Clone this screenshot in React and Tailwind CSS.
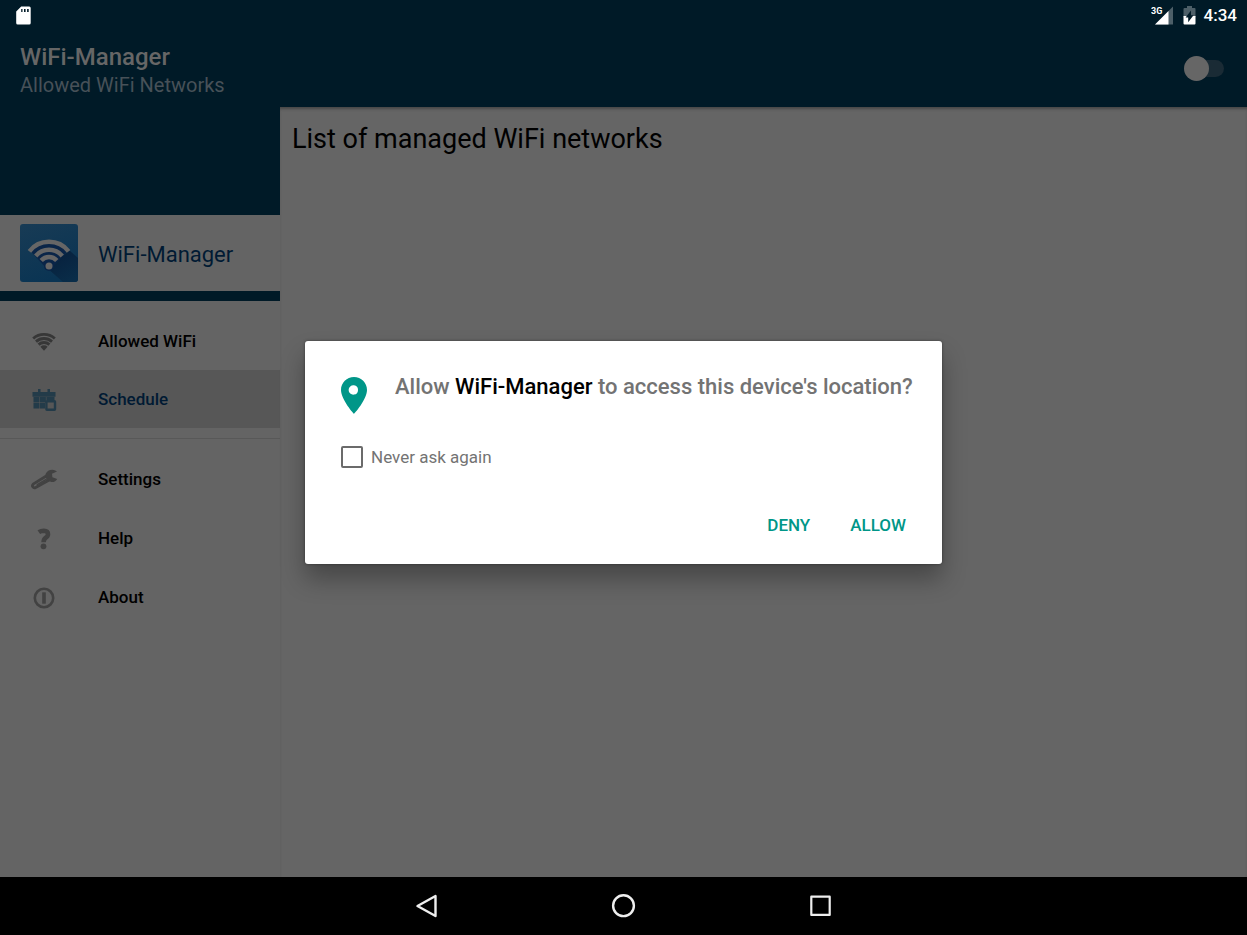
import React from "react";

function SdCardIcon() {
  return (
    <svg width="15" height="19" viewBox="0 0 15 19" aria-hidden="true">
      <path
        fill="#fff"
        fillRule="evenodd"
        d="M5.2 0.5H13.2Q14.7 0.5 14.7 2V17Q14.7 18.5 13.2 18.5H1.7Q0.2 18.5 0.2 17V5.5ZM5.2 3V6H6.5V3ZM8 3V6H9.6V3ZM11.1 3V6H12.7V3Z"
      />
    </svg>
  );
}

function SignalIcon() {
  return (
    <svg width="22" height="19" viewBox="0 0 22 19" role="img" aria-label="3G signal">
      <path fill="#4d5f68" d="M22 0.500V18.500H4Z" />
      <path fill="#fff" d="M17.500 5V18.500H4Z" />
      <path fill="#001a27" d="M0 0H13V5.500L9.500 9.500H0Z" />
      <text x="0" y="8" fill="#fff" className="text-[9px] font-bold">
        3G
      </text>
    </svg>
  );
}

function BatteryIcon() {
  return (
    <svg width="13" height="19" viewBox="0 0 13 19" aria-hidden="true">
      <path fill="#4d5f68" d="M4 0H9V2H11.5Q12.5 2 12.5 3V11H0.5V3Q0.5 2 1.5 2H4Z" />
      <path fill="#fff" d="M0.5 10H12.5V17.5Q12.5 18.5 11.5 18.5H1.5Q0.5 18.5 0.5 17.5Z" />
      <path fill="#001a27" d="M8 4.500V9.200H10.500L5.200 16.200V11.500H2.600Z" />
    </svg>
  );
}

function AppLogo() {
  return (
    <svg width="58" height="58" viewBox="0 0 58 58" aria-hidden="true">
      <defs>
        <linearGradient id="logoFill" x1="0" y1="0" x2="0.4" y2="1">
          <stop offset="0" stopColor="#183b55" />
          <stop offset="1" stopColor="#0a3453" />
        </linearGradient>
        <linearGradient id="logoShade" x1="0.2" y1="0" x2="0.8" y2="1">
          <stop offset="0" stopColor="#071f3c" />
          <stop offset="1" stopColor="#092d49" />
        </linearGradient>
      </defs>
      <rect width="58" height="58" rx="3" fill="url(#logoFill)" />
      <path d="M49.500 26.500L58 34V55Q58 58 55 58H43L27 44Z" fill="url(#logoShade)" />
      <path d="M10.200 26.700A24.500 24.500 0 0 1 47.800 26.700L31 45H27Z" fill="#0a2548" />
      <g fill="none" stroke="#666" strokeWidth="4.400">
        <path d="M9.400 27.300A25 25 0 0 1 48.600 27.300" />
        <path d="M15.700 32A17.400 17.400 0 0 1 42.300 32" />
        <path d="M21.200 36.500A10.300 10.300 0 0 1 36.800 36.500" />
      </g>
      <circle cx="29" cy="42" r="5" fill="#0a2548" />
      <circle cx="29" cy="42" r="3.500" fill="#666" />
    </svg>
  );
}

function WifiIcon() {
  return (
    <svg width="28" height="28" viewBox="0 0 28 28" aria-hidden="true">
      <g fill="none" stroke="#373737" strokeWidth="2.900">
        <path d="M3.200 10.500A16.200 16.200 0 0 1 24.800 10.500" />
        <path d="M6 13.600A12 12 0 0 1 22 13.600" />
        <path d="M8.600 16.600A8 8 0 0 1 19.400 16.600" />
      </g>
      <path fill="#373737" d="M10.400 18.700A5.200 5.200 0 0 1 17.600 18.700L14 22.800Z" />
    </svg>
  );
}

function CalendarIcon() {
  return (
    <svg width="28" height="28" viewBox="0 0 28 28" aria-hidden="true">
      <g fill="#233b49">
        <path d="M2.500 6H8V3H10.500V6H17.500V3H20V6H25.500V10.800H2.500Z" />
        <path d="M3.500 11.100H9V16.400H3.500ZM9.500 11.100H15.900V16.400H9.500ZM16.400 11.100H24.500V14H16.400ZM3.500 16.900H9V22.500H3.500ZM9.500 16.900H15V22.500H9.500Z" />
      </g>
      <rect x="16.400" y="15.200" width="8.600" height="8.600" rx="0.500" fill="#575757" stroke="#233b49" strokeWidth="2.400" />
    </svg>
  );
}

function WrenchIcon() {
  return (
    <svg width="28" height="28" viewBox="0 0 28 28" aria-hidden="true">
      <path
        fill="none"
        stroke="#424242"
        strokeWidth="2.800"
        strokeLinejoin="round"
        d="M16.300 10L3.500 17.900Q1.800 19.300 2.800 20.800Q3.900 22.500 5.700 21.500L19.600 13.800"
      />
      <path stroke="#424242" strokeWidth="1.400" strokeLinecap="round" d="M7.200 18.600L16.200 13.300" />
      <path
        fill="#424242"
        d="M27 5.500L22 7.800L22.400 11.300L27.200 12.900Q25.500 16.200 21.500 16Q18.500 15.800 16.300 12.800L15.200 9.500Q16.200 5.200 20 4.100Q24 3.100 27 5.500Z"
      />
    </svg>
  );
}

function HelpIcon() {
  return (
    <svg width="28" height="28" viewBox="0 0 28 28" aria-hidden="true">
      <path
        fill="none"
        stroke="#424242"
        strokeWidth="4.600"
        d="M8.800 7.200Q11 5.700 13.800 5.700Q18 5.800 18 9.200Q18 11.300 15.700 12.700Q13.600 14 13.600 17.300"
      />
      <circle cx="13.500" cy="21.300" r="2.900" fill="#424242" />
    </svg>
  );
}

function AboutIcon() {
  return (
    <svg width="28" height="28" viewBox="0 0 28 28" aria-hidden="true">
      <circle cx="14" cy="14" r="9.200" fill="none" stroke="#424242" strokeWidth="2.600" />
      <rect x="12.200" y="8.300" width="3.600" height="11.400" fill="#424242" />
    </svg>
  );
}

function PinIcon() {
  return (
    <svg width="26" height="37" viewBox="0 0 26 37" className="shrink-0" aria-hidden="true">
      <path
        fill="#009688"
        fillRule="evenodd"
        d="M13 0C5.800 0 0 5.800 0 13C0 22.700 13 37 13 37S26 22.700 26 13C26 5.800 20.200 0 13 0ZM13 17.600A4.700 4.700 0 1 1 13 8.300A4.700 4.700 0 0 1 13 17.600Z"
      />
    </svg>
  );
}

function NavItem({ icon, label, selected }) {
  return (
    <li>
      <a
        href="#"
        aria-current={selected ? "page" : undefined}
        className={
          selected
            ? "flex h-[58px] items-center gap-10 bg-[#575757] pt-0.5 pl-[30px] text-[17px] font-medium text-[#001a33]"
            : "flex h-[58px] items-center gap-10 pt-0.5 pl-[30px] text-[17px] font-medium text-black"
        }
      >
        {icon}
        {label}
      </a>
    </li>
  );
}

function StatusBar() {
  return (
    <div className="flex h-[30px] items-center justify-between pr-2.5 pl-4 text-white">
      <SdCardIcon />
      <div className="flex items-center">
        <SignalIcon />
        <span className="ml-2.5 flex">
          <BatteryIcon />
        </span>
        <span className="ml-2 pt-0.5 text-[17px] font-medium">4:34</span>
      </div>
    </div>
  );
}

function AppBar() {
  return (
    <div className="flex h-[77px] items-center justify-between pr-[23px] pl-5">
      <div className="pt-1">
        <h1 className="text-[24px] leading-7 font-medium text-[#666]">WiFi-Manager</h1>
        <p className="text-[20px] leading-7 text-[#475158]">Allowed WiFi Networks</p>
      </div>
      <input
        type="checkbox"
        role="switch"
        aria-label="WiFi manager enabled"
        className="relative h-[25px] w-10 appearance-none before:absolute before:top-1 before:right-0 before:h-[17px] before:w-8 before:rounded-full before:bg-[#1a2b35] after:absolute after:top-0 after:left-0 after:size-[25px] after:rounded-full after:bg-[#666]"
      />
    </div>
  );
}

function Sidebar() {
  return (
    <aside className="w-[280px] shrink-0 bg-[#646464]">
      <div className="h-[108px] bg-[#001a27]" />
      <div className="flex h-[76px] items-center gap-5 pl-5 text-[22px] text-[#001a33]">
        <AppLogo />
        <span className="pt-0.5">WiFi-Manager</span>
      </div>
      <div className="h-2.5 bg-[#001a27]" />
      <nav className="pt-[11px]">
        <ul>
          <NavItem icon={<WifiIcon />} label="Allowed WiFi" />
          <NavItem icon={<CalendarIcon />} label="Schedule" selected />
        </ul>
        <ul className="mt-2.5 flex flex-col gap-px border-t border-[#585858] pt-[11px]">
          <NavItem icon={<WrenchIcon />} label="Settings" />
          <NavItem icon={<HelpIcon />} label="Help" />
          <NavItem icon={<AboutIcon />} label="About" />
        </ul>
      </nav>
    </aside>
  );
}

function PermissionDialog() {
  return (
    <div
      role="dialog"
      aria-modal="true"
      aria-labelledby="permission-title"
      className="flex w-[637px] flex-col rounded-[3px] bg-white px-9 pt-9 pb-[18px] shadow-[0_15px_24px_rgba(0,0,0,0.3),0_0_3px_rgba(0,0,0,0.4)]"
    >
      <div className="flex gap-7">
        <PinIcon />
        <h2 id="permission-title" className="text-[22px] leading-5 font-medium whitespace-nowrap text-[#737373]">
          Allow <span className="text-black">WiFi-Manager</span> to access this device's location?
        </h2>
      </div>
      <label className="mt-8 flex items-center gap-2 text-[17px] leading-[22px] text-[#737373]">
        <input
          type="checkbox"
          className="size-[22px] appearance-none rounded-[2px] border-2 border-[#6b6b6b] checked:bg-[#009688]"
        />
        Never ask again
      </label>
      <div className="-mr-2.5 mt-[38px] flex justify-end gap-5 text-[17px] font-medium text-[#009688]">
        <button type="button" className="h-10 px-2.5">
          DENY
        </button>
        <button type="button" className="h-10 px-2.5">
          ALLOW
        </button>
      </div>
    </div>
  );
}

function SystemNav() {
  return (
    <footer className="flex h-[58px] shrink-0 items-center justify-center gap-[169px] bg-black">
      <button type="button" aria-label="Back" className="flex">
        <svg width="28" height="28" viewBox="0 0 28 28" fill="none" stroke="#eee" strokeWidth="2.400" strokeLinejoin="round">
          <path d="M22.500 4V24L4.500 14Z" />
        </svg>
      </button>
      <button type="button" aria-label="Home" className="flex">
        <svg width="28" height="28" viewBox="0 0 28 28" fill="none" stroke="#eee" strokeWidth="2.400">
          <circle cx="13.500" cy="13.700" r="10.400" />
        </svg>
      </button>
      <button type="button" aria-label="Recent apps" className="flex">
        <svg width="28" height="28" viewBox="0 0 28 28" fill="none" stroke="#eee" strokeWidth="2.200" strokeLinejoin="round">
          <rect x="4.300" y="4.700" width="18.400" height="18.200" />
        </svg>
      </button>
    </footer>
  );
}

export default function App() {
  return (
    <div className="flex min-h-screen flex-col bg-black font-['Roboto',sans-serif]">
      <div className="relative flex flex-1 flex-col">
        <header className="bg-[#001a27]">
          <StatusBar />
          <AppBar />
        </header>
        <div className="flex flex-1">
          <Sidebar />
          <main className="flex-1 bg-[#656565] px-3 pt-3.5 shadow-[inset_0_3px_3px_-1px_rgba(0,0,0,0.3)]">
            <h2 className="text-[27px] leading-9 text-black">List of managed WiFi networks</h2>
          </main>
        </div>
        <div className="absolute inset-x-0 top-7 bottom-0 flex items-center justify-center">
          <PermissionDialog />
        </div>
      </div>
      <SystemNav />
    </div>
  );
}
